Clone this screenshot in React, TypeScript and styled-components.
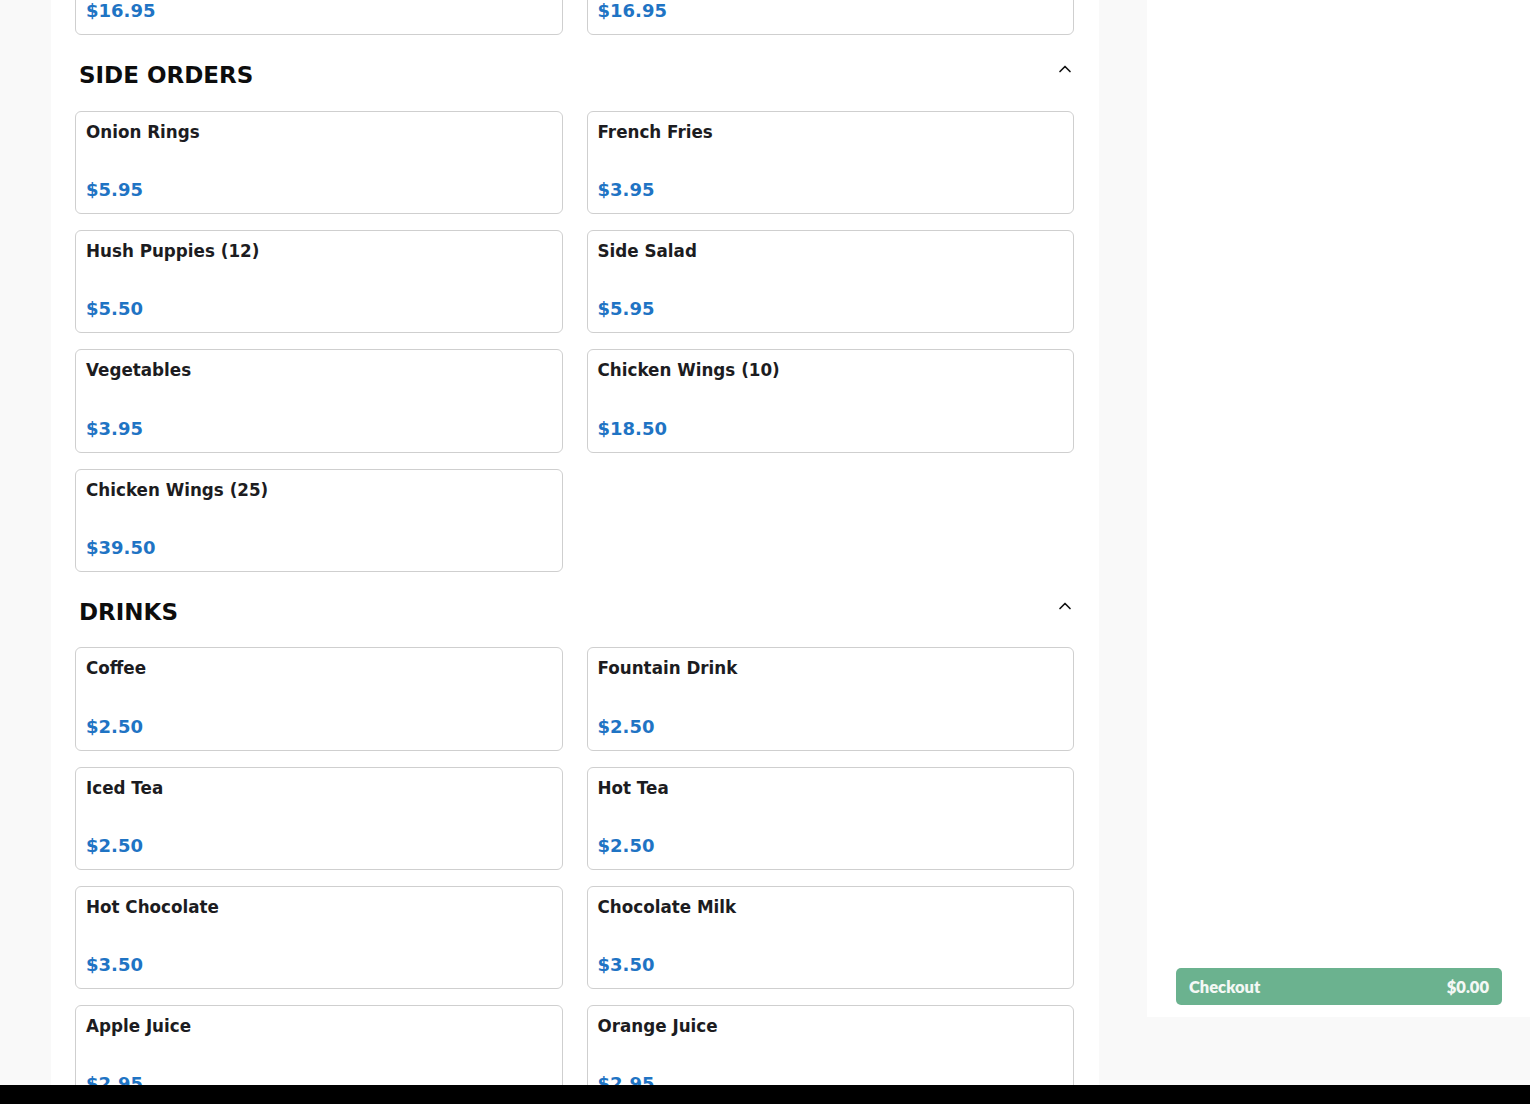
import React from "react";
import styled, { createGlobalStyle } from "styled-components";
import { ChevronUp } from "lucide-react";

const GlobalStyle = createGlobalStyle`
  html, body { margin: 0; padding: 0; }
  body {
    background: #f9f9f9;
    font-family: "DejaVu Sans", "Liberation Sans", sans-serif;
    overflow: hidden;
  }
  * { box-sizing: border-box; }
`;

const Page = styled.div`
  height: 1104px;
  display: flex;
  flex-direction: column;
`;

const Viewport = styled.div`
  height: 1085px;
  display: flex;
  align-items: flex-start;
  overflow: hidden;
  padding-left: 51px;
`;

const BottomBar = styled.div`
  height: 19px;
  background: #000;
  flex-shrink: 0;
`;

const Main = styled.main`
  width: 1048px;
  height: 1085px;
  background: #fff;
  padding: 0 25px 0 24px;
  overflow: hidden;
  flex-shrink: 0;
`;

const Scroller = styled.div`
  margin-top: -67.8px;
`;

const Sidebar = styled.aside`
  margin-left: 48px;
  width: 383px;
  height: 1017px;
  background: #fff;
  display: flex;
  flex-direction: column;
  justify-content: flex-end;
  padding: 0 28px 12px 29px;
  flex-shrink: 0;
`;

const CheckoutButton = styled.button`
  display: flex;
  justify-content: space-between;
  align-items: center;
  height: 37px;
  width: 100%;
  border: none;
  border-radius: 5px;
  background: #6bb28f;
  color: #f4f8f5;
  font-family: "Lato", "Open Sans", sans-serif;
  font-weight: 800;
  font-size: 16.5px;
  padding: 0 13px 0 13px;
  cursor: pointer;
`;

const Section = styled.section``;

const SectionHeader = styled.div`
  display: flex;
  justify-content: space-between;
  align-items: flex-start;
  padding: 26px 0 20.6px 4px;
`;

const SectionTitle = styled.h2`
  margin: 0;
  font-size: 23px;
  line-height: 29px;
  font-weight: 700;
  color: #0d0d0d;
`;

const ToggleIcon = styled.span`
  display: flex;
  margin-top: -2px;
  margin-right: -1px;
  color: #111;
`;

const Grid = styled.div`
  display: grid;
  grid-template-columns: 1fr 1fr;
  column-gap: 24px;
  row-gap: 16px;
`;

const Card = styled.div`
  height: 103.2px;
  border: 1px solid #cfcfcf;
  border-radius: 6px;
  padding: 10px 10px 13px 10px;
  display: flex;
  flex-direction: column;
  justify-content: space-between;
  background: #fff;
`;

const ItemName = styled.div`
  font-size: 16.75px;
  font-weight: 700;
  color: #1c1c21;
`;

const ItemPrice = styled.div`
  font-size: 18px;
  font-weight: 700;
  color: #1f74c4;
`;

type Item = { name: string; price: string };

const previous: Item[] = [
  { name: "Fish Platter", price: "$16.95" },
  { name: "Shrimp Platter", price: "$16.95" },
];

const sections: { title: string; items: Item[] }[] = [
  {
    title: "SIDE ORDERS",
    items: [
      { name: "Onion Rings", price: "$5.95" },
      { name: "French Fries", price: "$3.95" },
      { name: "Hush Puppies (12)", price: "$5.50" },
      { name: "Side Salad", price: "$5.95" },
      { name: "Vegetables", price: "$3.95" },
      { name: "Chicken Wings (10)", price: "$18.50" },
      { name: "Chicken Wings (25)", price: "$39.50" },
    ],
  },
  {
    title: "DRINKS",
    items: [
      { name: "Coffee", price: "$2.50" },
      { name: "Fountain Drink", price: "$2.50" },
      { name: "Iced Tea", price: "$2.50" },
      { name: "Hot Tea", price: "$2.50" },
      { name: "Hot Chocolate", price: "$3.50" },
      { name: "Chocolate Milk", price: "$3.50" },
      { name: "Apple Juice", price: "$2.95" },
      { name: "Orange Juice", price: "$2.95" },
    ],
  },
];

const MenuCard = ({ item }: { item: Item }) => (
  <Card>
    <ItemName>{item.name}</ItemName>
    <ItemPrice>{item.price}</ItemPrice>
  </Card>
);

export default function App() {
  return (
    <Page>
      <GlobalStyle />
      <Viewport>
        <Main>
          <Scroller>
            <Grid>
              {previous.map((it) => (
                <MenuCard key={it.name} item={it} />
              ))}
            </Grid>
            {sections.map((s) => (
              <Section key={s.title}>
                <SectionHeader>
                  <SectionTitle>{s.title}</SectionTitle>
                  <ToggleIcon>
                    <ChevronUp size={20} strokeWidth={2} />
                  </ToggleIcon>
                </SectionHeader>
                <Grid>
                  {s.items.map((it) => (
                    <MenuCard key={it.name} item={it} />
                  ))}
                </Grid>
              </Section>
            ))}
          </Scroller>
        </Main>
        <Sidebar>
          <CheckoutButton>
            <span>Checkout</span>
            <span>$0.00</span>
          </CheckoutButton>
        </Sidebar>
      </Viewport>
      <BottomBar />
    </Page>
  );
}
